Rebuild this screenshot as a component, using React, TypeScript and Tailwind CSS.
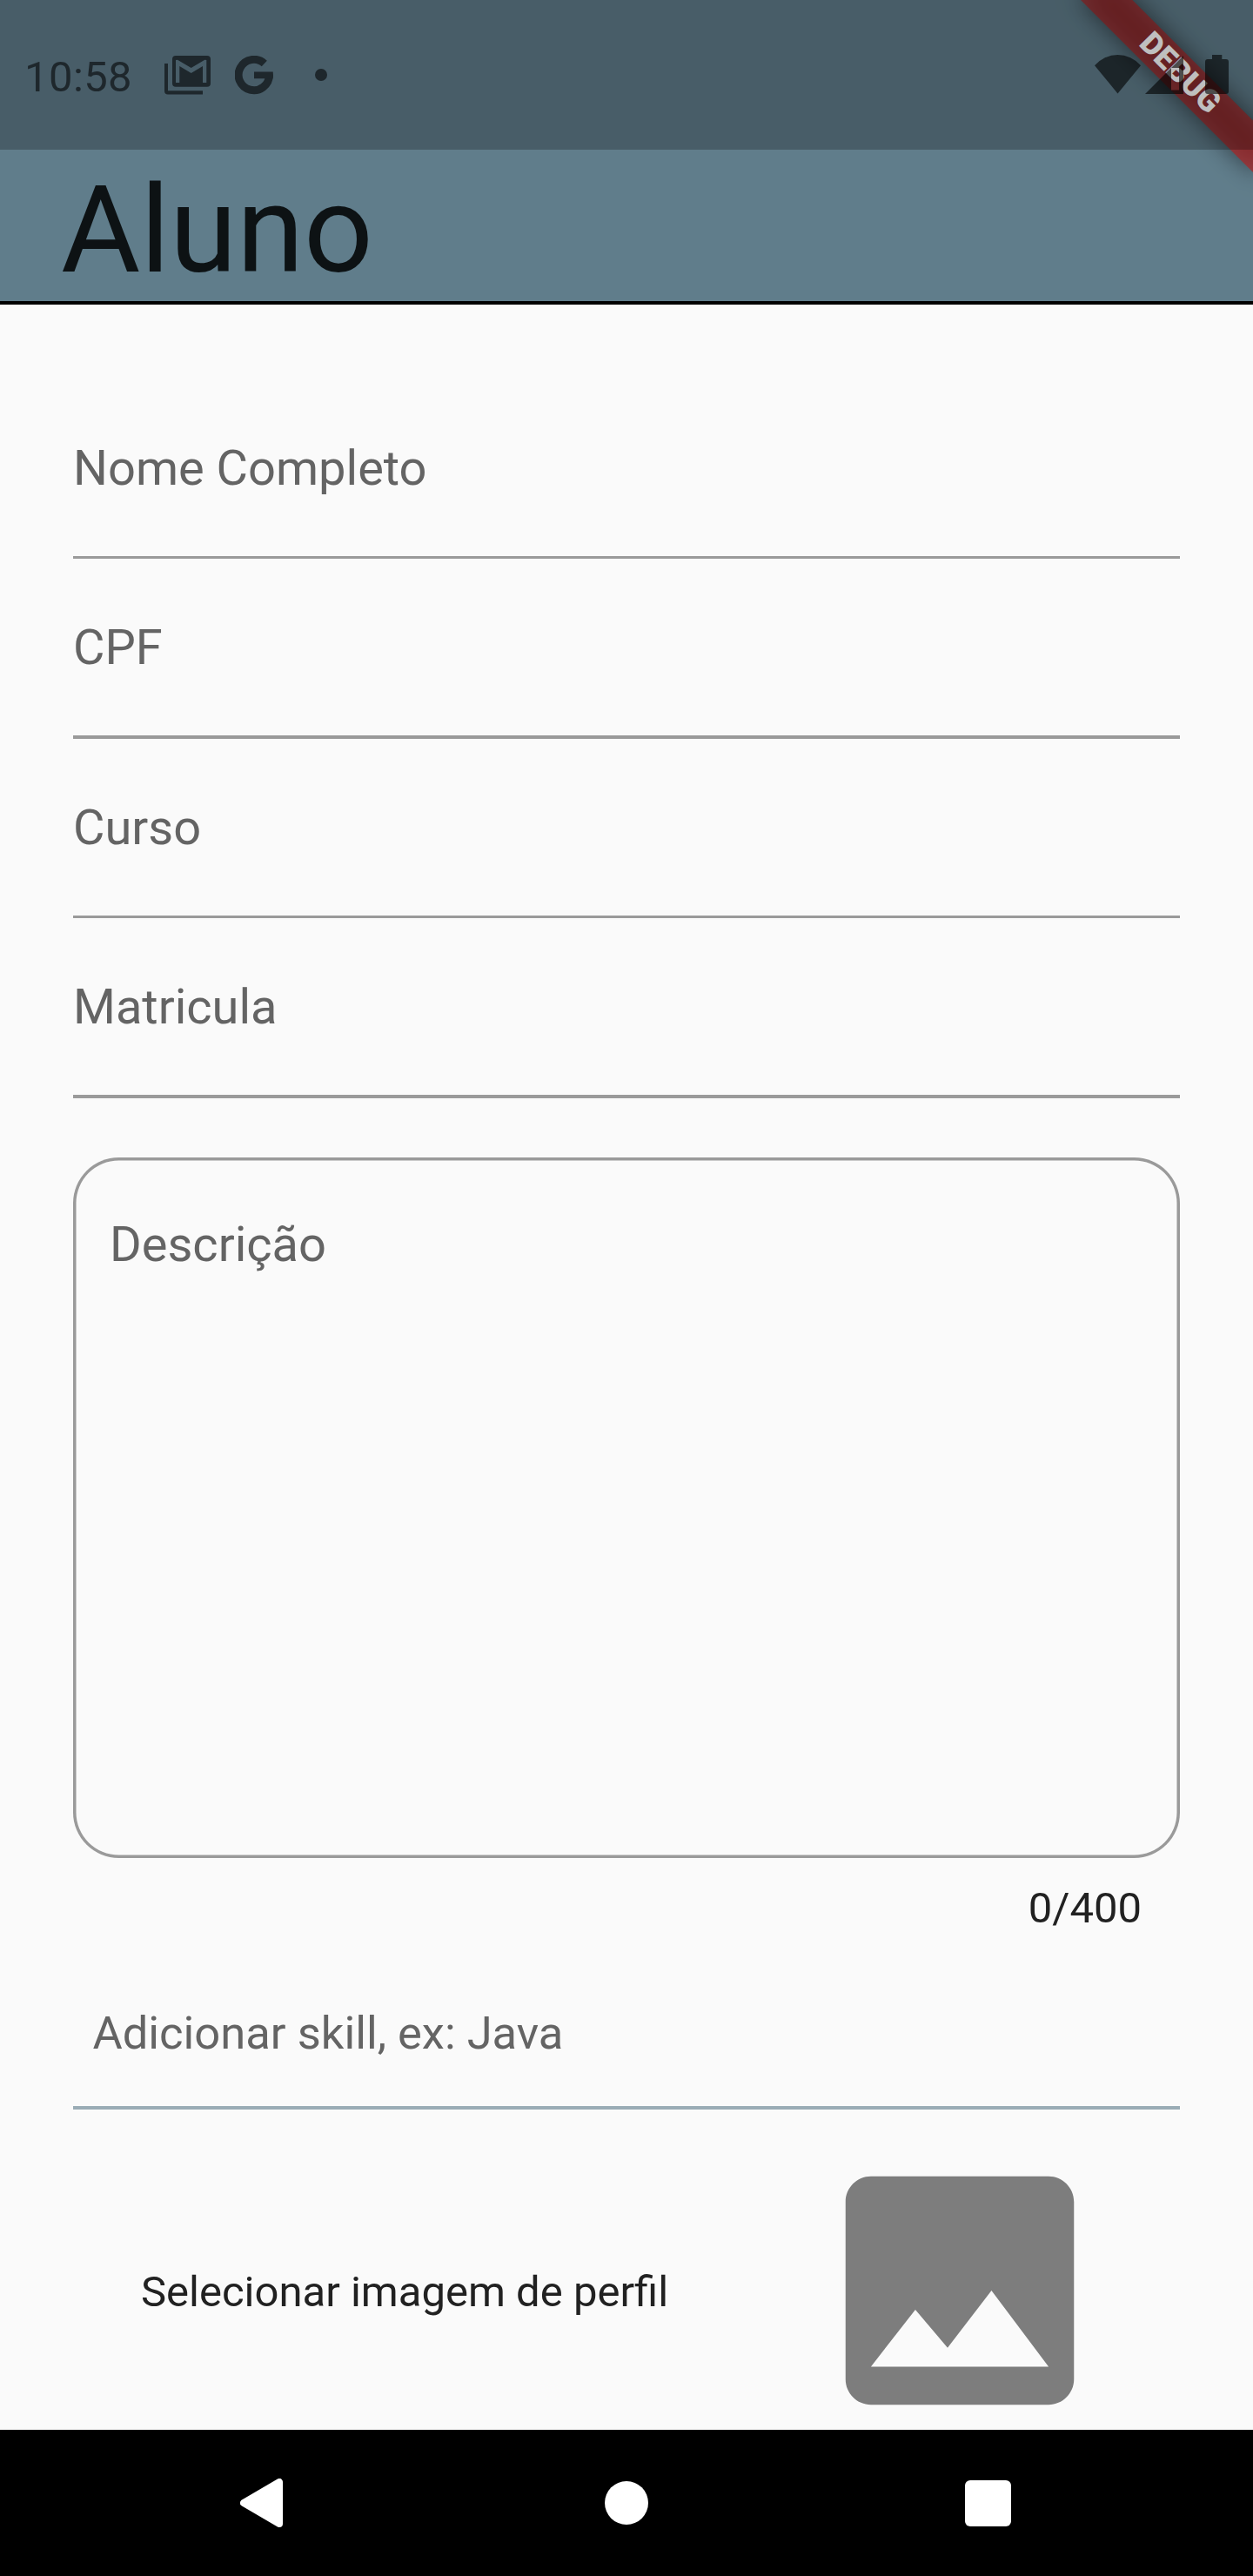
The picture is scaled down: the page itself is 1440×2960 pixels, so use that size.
const fields = ["Nome Completo", "CPF", "Curso", "Matricula"];

function GmailIcon() {
  return (
    <svg viewBox="0 0 53 45" className="h-[45px] w-[53px] shrink-0" fill="currentColor">
      <path d="M0 9H4V40.3H44V44.5H4Q0 44.5 0 40.5Z" />
      <path
        fillRule="evenodd"
        d="M13 0H49Q53 0 53 4V31.7Q53 35.7 49 35.7H13Q9 35.7 9 31.7V4Q9 0 13 0ZM13 31V5L15 4.7L30.7 14L46.3 4.7L48.3 5V31H44V12L30.7 20L17.3 12V31Z"
      />
    </svg>
  );
}

function GoogleIcon() {
  return (
    <svg viewBox="0 0 44 45" className="ml-[28px] h-[45px] w-[44px] shrink-0">
      <path d="M33.8 9.05A17.7 17.7 0 1 0 39.5 22.3" fill="none" stroke="currentColor" strokeWidth="9" />
      <path d="M22 18.4H43.7L44 22.3L43.5 26.3H22Z" fill="currentColor" />
    </svg>
  );
}

function StatusBar() {
  return (
    <div className="absolute inset-x-0 top-0 flex h-[172px] items-start bg-black/25 pt-[64px] pr-[28px] pl-[28px]">
      <div className="flex grow items-start text-[#1e272c]">
        <span className="w-[161px] text-[49px] leading-none tracking-[0.4px]">10:58</span>
        <GmailIcon />
        <GoogleIcon />
        <span className="mt-[15px] ml-[48px] size-[14px] rounded-full bg-current" />
      </div>
      <div className="-mt-px flex text-black/60">
        <svg viewBox="0 0 53 45" className="h-[45px] w-[53px]" fill="currentColor">
          <path d="M0 12.2A35 35 0 0 1 53 12.2L26.5 44.5Z" />
        </svg>
        <svg viewBox="0 0 44 45" className="ml-[5px] h-[45px] w-[44px]" fill="currentColor">
          <path fillRule="evenodd" d="M0 45L44 1V45ZM30 15V40.5H39V15Z" />
        </svg>
        <svg viewBox="0 0 27 45" className="ml-[25px] h-[45px] w-[27px]" fill="currentColor">
          <path d="M8 0H19.3V5H24Q27 5 27 8V42Q27 45 24 45H3Q0 45 0 42V8Q0 5 3 5H8Z" />
        </svg>
      </div>
    </div>
  );
}

function DebugBanner() {
  return (
    <div className="absolute top-0 right-0 size-[240px] overflow-hidden">
      <div className="absolute top-0 left-full origin-top-left rotate-45">
        <div className="absolute top-[98px] -left-[140px] h-[42px] w-[280px] bg-black/50 blur-[14px]" />
        <div className="absolute top-[98px] -left-[140px] flex h-[42px] w-[280px] items-center justify-center bg-[#b71c1c]/63 text-[35.7px] leading-none font-black text-white">
          DEBUG
        </div>
      </div>
    </div>
  );
}

function NavigationBar() {
  return (
    <nav className="flex h-[168px] shrink-0 items-center bg-black pl-[276px]">
      <svg viewBox="0 0 49 56" className="h-[56px] w-[49px]">
        <path d="M4 28L45 4V52Z" fill="white" stroke="white" strokeWidth="8" strokeLinejoin="round" />
      </svg>
      <span className="ml-[370px] size-[50px] rounded-full bg-white" />
      <span className="ml-[364px] size-[53px] rounded-[6px] bg-white" />
    </nav>
  );
}

export default function App() {
  return (
    <div className="relative flex h-[2960px] w-[1440px] flex-col overflow-hidden bg-[#fafafa] font-['Roboto',sans-serif]">
      <header className="h-[350px] shrink-0 border-b-4 border-black bg-[#607d8b] pt-[194px] pl-[70px]">
        <h1 className="text-[140px] leading-none tracking-[-0.2px] text-[#0d1214]">Aluno</h1>
      </header>
      <DebugBanner />
      <StatusBar />

      <main className="flex min-h-0 grow flex-col overflow-hidden px-[84px] pt-[85.8px] text-[#646464]">
        {fields.map((label) => (
          <div key={label} className="flex h-[206.5px] shrink-0 flex-col justify-between pt-[74px]">
            <label className="text-[56px] leading-none">{label}</label>
            <div className="h-[3.5px] bg-[#9a9a9a]" />
          </div>
        ))}

        <div className="mt-[68.4px] h-[804.8px] shrink-0 rounded-[52.5px] px-[42px] pt-[71.5px] inset-ring-[3.5px] inset-ring-[#9a9a9a]">
          <label className="block text-[56px] leading-none">Descrição</label>
        </div>
        <div className="mt-[33px] pr-[44px] text-right text-[49px] leading-none text-[#212121]">0/400</div>

        <div className="mt-[93px] flex h-[114px] shrink-0 flex-col justify-between">
          <label className="pl-[22.5px] text-[52.5px] leading-none">Adicionar skill, ex: Java</label>
          <div className="h-[4px] bg-[#9aacb5]" />
        </div>

        <div className="mt-[33px] flex shrink-0 items-center">
          <span className="w-[843.6px] shrink-0 pt-[3px] pl-[78px] text-[49px] leading-none text-[#212121]">
            Selecionar imagem de perfil
          </span>
          <svg viewBox="0 0 24 24" className="size-[350px] shrink-0" fill="#7d7d7d">
            <path d="M21 19V5c0-1.1-.9-2-2-2H5c-1.1 0-2 .9-2 2v14c0 1.1.9 2 2 2h14c1.1 0 2-.9 2-2zM8.5 13.5l2.54 3.01L14.5 12l4.5 6H5l3.5-4.5z" />
          </svg>
        </div>
      </main>

      <NavigationBar />
    </div>
  );
}
